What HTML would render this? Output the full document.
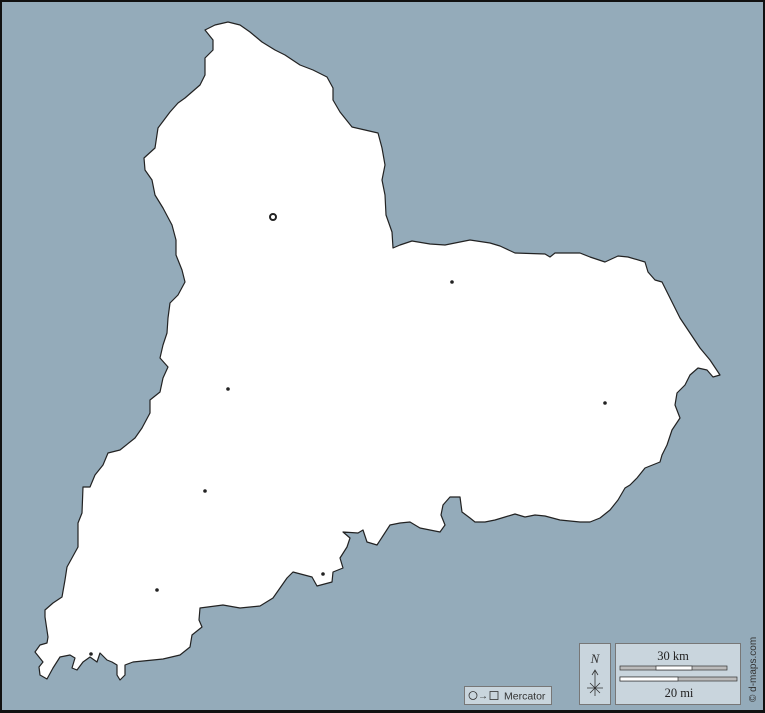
<!DOCTYPE html>
<html><head><meta charset="utf-8"><style>
html,body{margin:0;padding:0;width:765px;height:713px;overflow:hidden;background:#000}
svg{display:block}
</style></head><body>
<svg width="765" height="713" viewBox="0 0 765 713" xmlns="http://www.w3.org/2000/svg">
<rect x="0" y="0" width="765" height="713" fill="#111"/>
<rect x="2" y="2" width="761" height="708" fill="#94abba"/>
<path fill="#fff" stroke="#222" stroke-width="1.2" stroke-linejoin="round" d="
M205,30 L215,25 L228,22 L240,25 L250,32 L262,42 L275,50 L285,55 L300,65 L313,70 L327,77 L333,88 L333,100 L340,112 L352,127 L365,130 L378,133 L382,148 L385,165 L382,180 L385,195 L386,215 L392,232 L393,248 L400,245 L412,241 L430,244 L445,245 L470,240 L490,243 L500,246 L515,253 L545,254 L550,257 L555,253 L580,253 L590,257 L605,262 L618,256 L628,257 L645,262 L648,272 L655,280 L662,282 L670,298 L680,318 L690,333 L700,348 L710,360 L720,375 L713,377 L707,370 L698,368 L690,375 L685,385 L677,393 L675,405 L680,418 L672,430 L667,445 L662,455 L660,462 L645,468 L637,478 L630,485 L625,488 L618,500 L610,510 L600,518 L590,522 L580,522 L560,520 L545,516 L535,515 L525,517 L515,514 L505,517 L495,520 L485,522 L475,522 L470,518 L462,512 L460,497 L450,497 L443,505 L441,515 L445,525 L440,532 L420,528 L410,522 L400,523 L390,525 L377,545 L367,542 L363,530 L358,533 L343,532 L350,538 L347,547 L340,558 L343,568 L333,572 L332,582 L317,586 L312,577 L293,572 L287,578 L273,598 L260,606 L240,608 L223,605 L200,608 L199,620 L202,627 L192,635 L190,647 L180,655 L163,659 L133,662 L125,665 L125,675 L120,680 L117,675 L117,665 L112,662 L107,660 L100,653 L97,662 L90,657 L83,662 L77,670 L72,668 L75,658 L70,655 L60,657 L53,668 L47,679 L40,675 L39,667 L43,662 L35,652 L40,645 L47,643 L48,637 L45,617 L45,610 L53,603 L62,597 L65,580 L67,567 L78,547 L78,523 L82,513 L83,487 L90,487 L95,475 L103,465 L108,453 L120,450 L135,438 L142,428 L150,413 L150,400 L160,392 L163,378 L168,367 L160,358 L163,345 L167,333 L168,318 L170,303 L178,295 L185,282 L182,270 L176,255 L176,240 L172,225 L163,208 L155,195 L152,180 L145,170 L144,158 L155,148 L158,128 L170,112 L178,103 L185,98 L200,85 L205,75 L205,58 L213,50 L213,40 Z"/>
<circle cx="273" cy="217" r="3" fill="none" stroke="#222" stroke-width="2"/>
<g fill="#222">
<circle cx="452" cy="282" r="1.8"/><circle cx="228" cy="389" r="1.8"/><circle cx="605" cy="403" r="1.8"/>
<circle cx="205" cy="491" r="1.8"/><circle cx="157" cy="590" r="1.8"/><circle cx="323" cy="574" r="1.8"/>
<circle cx="91" cy="654" r="1.8"/>
</g>
<rect x="464.5" y="686.5" width="87" height="18" fill="#c9d5dd" stroke="#777"/>
<circle cx="473" cy="695.5" r="4" fill="none" stroke="#333" stroke-width="0.8"/>
<text x="478" y="699" font-family="Liberation Sans, sans-serif" font-size="10" fill="#333">→</text>
<rect x="490" y="691.5" width="8" height="8" fill="none" stroke="#333" stroke-width="0.8"/>
<text x="504" y="699.5" font-family="Liberation Sans, sans-serif" font-size="10.5" fill="#333">Mercator</text>
<rect x="579.5" y="643.5" width="31" height="61" fill="#c9d5dd" stroke="#777"/>
<text x="595" y="663" text-anchor="middle" font-family="Liberation Serif, serif" font-style="italic" font-size="13" fill="#333">N</text>
<path d="M595,696 V671 M592,675 L595,670 L598,675 M587,688 H603 M590,683 L600,693 M600,683 L590,693" stroke="#333" stroke-width="0.8" fill="none"/>
<rect x="615.5" y="643.5" width="125" height="61" fill="#c9d5dd" stroke="#777"/>
<text x="673" y="660" text-anchor="middle" font-family="Liberation Serif, serif" font-size="12.5" fill="#222">30 km</text>
<rect x="620" y="666" width="107" height="4" fill="#bbb" stroke="#333" stroke-width="0.7"/>
<rect x="656" y="666" width="36" height="4" fill="#fff" stroke="#333" stroke-width="0.7"/>
<rect x="620" y="677" width="117" height="4" fill="#bbb" stroke="#333" stroke-width="0.7"/>
<rect x="620" y="677" width="58" height="4" fill="#fff" stroke="#333" stroke-width="0.7"/>
<text x="679" y="697" text-anchor="middle" font-family="Liberation Serif, serif" font-size="12.5" fill="#222">20 mi</text>
<text transform="translate(756,702) rotate(-90)" font-family="Liberation Sans, sans-serif" font-size="10" fill="#333">© d-maps.com</text>
</svg>
</body></html>
